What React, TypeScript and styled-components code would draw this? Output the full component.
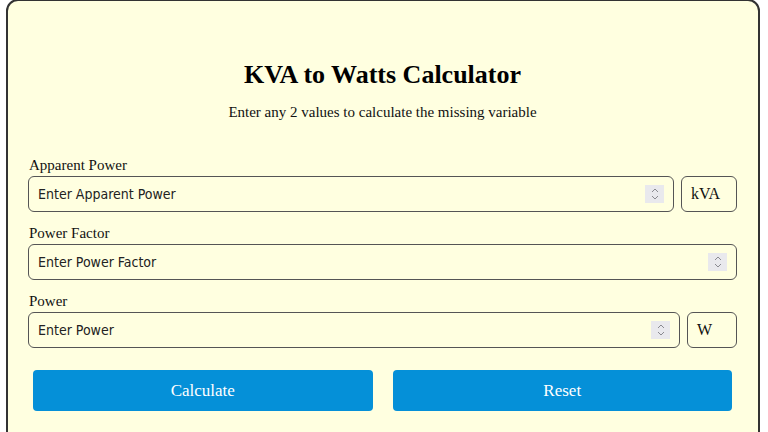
import React from 'react';
import styled, { createGlobalStyle } from 'styled-components';

const GlobalStyle = createGlobalStyle`
  html, body {
    margin: 0;
    padding: 0;
    background: #ffffff;
  }
  body {
    font-family: "Liberation Serif", "Times New Roman", serif;
    color: #111;
  }
`;

type Row = {
  label: string;
  placeholder: string;
  unit?: string;
};

const rows: Row[] = [
  { label: 'Apparent Power', placeholder: 'Enter Apparent Power', unit: 'kVA' },
  { label: 'Power Factor', placeholder: 'Enter Power Factor' },
  { label: 'Power', placeholder: 'Enter Power', unit: 'W' },
];

const Spinner = () => (
  <SpinBox>
    <svg width="10" height="14" viewBox="0 0 10 14">
      <path d="M2 5 L5 2 L8 5" fill="none" stroke="#8a8a90" strokeWidth="1" />
      <path d="M2 9 L5 12 L8 9" fill="none" stroke="#8a8a90" strokeWidth="1" />
    </svg>
  </SpinBox>
);

const App = () => {
  return (
    <>
      <GlobalStyle />
      <Card>
        <Title>KVA to Watts Calculator</Title>
        <Subtitle>Enter any 2 values to calculate the missing variable</Subtitle>
        <Form>
          {rows.map((row) => (
            <Group key={row.label}>
              <Label>{row.label}</Label>
              <FieldRow>
                <Field>
                  <Input type="text" placeholder={row.placeholder} />
                  <Spinner />
                </Field>
                {row.unit && <Unit $wide={row.unit === 'kVA'}>{row.unit}</Unit>}
              </FieldRow>
            </Group>
          ))}
          <Buttons>
            <Button type="button">Calculate</Button>
            <Button type="button">Reset</Button>
          </Buttons>
        </Form>
      </Card>
    </>
  );
};

export default App;

const Card = styled.div`
  box-sizing: border-box;
  width: 754px;
  height: 460px;
  margin: -1px 0 0 6px;
  padding: 59px 21px 0 20px;
  background: #ffffe0;
  border: 2px solid #333;
  border-radius: 12px;
`;

const Title = styled.h2`
  margin: 0;
  font-size: 26px;
  line-height: 30px;
  font-weight: bold;
  text-align: center;
  color: #000;
`;

const Subtitle = styled.p`
  margin: 12px 0 0 0;
  font-size: 15px;
  line-height: 20px;
  text-align: center;
  color: #111;
`;

const Form = styled.form`
  display: flex;
  flex-direction: column;
  margin-top: 34px;
`;

const Group = styled.div`
  display: flex;
  flex-direction: column;
  margin-bottom: 12px;
`;

const Label = styled.label`
  font-size: 15px;
  line-height: 18px;
  margin: 0 0 2px 1px;
  color: #111;
`;

const FieldRow = styled.div`
  display: flex;
  gap: 7px;
  align-items: center;
`;

const Field = styled.div`
  flex: 1;
  display: flex;
  align-items: center;
  height: 36px;
  box-sizing: border-box;
  border: 1px solid #555;
  border-radius: 6px;
  padding: 0 9px 0 9px;
`;

const Input = styled.input`
  flex: 1;
  min-width: 0;
  border: none;
  outline: none;
  background: transparent;
  font-family: "DejaVu Sans Condensed", "DejaVu Sans", Tahoma, sans-serif;
  font-size: 14px;
  color: #222;
  padding: 0;
  &::placeholder {
    color: #222;
  }
`;

const SpinBox = styled.div`
  display: flex;
  align-items: center;
  justify-content: center;
  width: 19px;
  height: 18px;
  background: #e9e9ed;
`;

const Unit = styled.div<{ $wide: boolean }>`
  box-sizing: border-box;
  width: ${(p) => (p.$wide ? '56px' : '50px')};
  height: 36px;
  border: 1px solid #555;
  border-radius: 6px;
  display: flex;
  align-items: center;
  padding-left: 9px;
  font-size: 16px;
  color: #111;
`;

const Buttons = styled.div`
  display: flex;
  gap: 20px;
  padding: 10px 5px 0 5px;
`;

const Button = styled.button`
  flex: 1;
  height: 41px;
  border: none;
  border-radius: 4px;
  background: #0590d8;
  color: #fff;
  font-family: "Liberation Serif", "Times New Roman", serif;
  font-size: 17px;
  cursor: pointer;
`;
